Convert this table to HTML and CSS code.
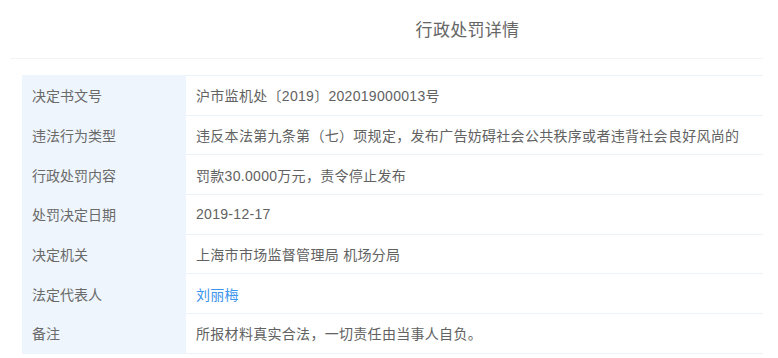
FILE: index.html
```html
<!DOCTYPE html>
<html lang="zh">
<head>
<meta charset="utf-8">
<title>行政处罚详情</title>
<link rel="stylesheet" href="styles.css">
</head>
<body>
<div class="page">
  <div class="header">
    <h1 class="title">行政处罚详情</h1>
  </div>
  <table class="detail">
    <tr><th>决定书文号</th><td>沪市监机处〔2019〕202019000013号</td></tr>
    <tr><th>违法行为类型</th><td>违反本法第九条第（七）项规定，发布广告妨碍社会公共秩序或者违背社会良好风尚的</td></tr>
    <tr><th>行政处罚内容</th><td>罚款30.0000万元，责令停止发布</td></tr>
    <tr><th>处罚决定日期</th><td>2019-12-17</td></tr>
    <tr><th>决定机关</th><td>上海市市场监督管理局 机场分局</td></tr>
    <tr><th>法定代表人</th><td><a class="link" href="#">刘丽梅</a></td></tr>
    <tr><th>备注</th><td>所报材料真实合法，一切责任由当事人自负。</td></tr>
  </table>
</div>
</body>
</html>
```

FILE: styles.css
```css
html, body {
  margin: 0;
  padding: 0;
  background: #ffffff;
}
body {
  font-family: "Liberation Sans", "Noto Sans CJK SC", sans-serif;
  color: #666;
}
.page {
  padding: 0 15px 0 10px;
}
.header {
  height: 59px;
  border-bottom: 1px solid #f2f5f8;
  display: flex;
  align-items: center;
  justify-content: center;
  padding-left: 162px;
  box-sizing: border-box;
}
.title {
  margin: 0 0 1px 0;
  font-size: 17px;
  font-weight: normal;
  color: #666;
  letter-spacing: 0.3px;
}
.detail {
  margin: 16px 0 0 12px;
  width: 741px;
  border-collapse: collapse;
  font-size: 14px;
}
.detail tr {
  height: 39.7px;
}
.detail th,
.detail td {
  border-top: 1px solid #eaf2fa;
  border-bottom: 1px solid #eaf2fa;
  padding: 0 0 0 10px;
  text-align: left;
  font-weight: normal;
  white-space: nowrap;
}
.detail th {
  width: 154px;
  background: #eef5fc;
  color: #6a6a6a;
  border-color: #eef5fc;
}
.detail td {
  color: #626262;
  letter-spacing: 0.3px;
}
.link {
  color: #3c95ee;
  text-decoration: none;
}
```
